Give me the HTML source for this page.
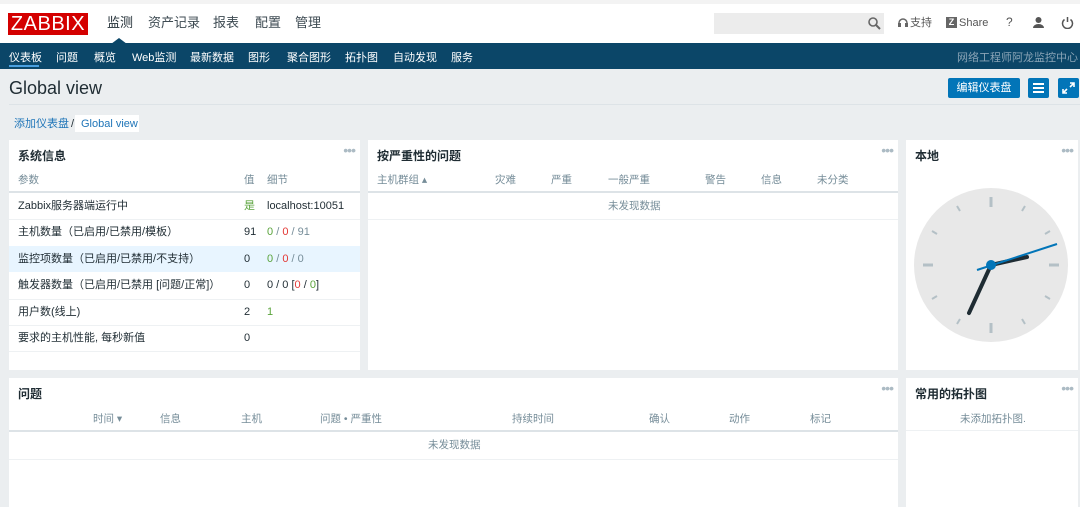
<!DOCTYPE html>
<html><head><meta charset="utf-8"><style>
*{margin:0;padding:0;box-sizing:border-box;white-space:nowrap}
body{width:1080px;height:507px;overflow:hidden;background:#ebeef0;font-family:"Liberation Sans","Noto Sans CJK SC",sans-serif;font-size:11px;color:#1f2c33;position:relative}
.a{position:absolute;white-space:nowrap;line-height:14px}
.top{position:absolute;left:0;top:0;width:1080px;height:43px;background:#fff;border-top:4px solid #f3f3f3}
.nav{position:absolute;left:0;top:43px;width:1080px;height:26px;background:#0b4668}
.nav span{position:absolute;top:6px;color:#fff;font-size:11px;white-space:nowrap}
.w{position:absolute;background:#fff}
.h{position:absolute;left:9px;top:7px;font-size:12px;font-weight:bold;color:#1f2c33}
.dots{position:absolute;top:2px;right:5px;color:#acbbc4;font-size:14px;letter-spacing:-1px}
.th{position:absolute;color:#768d99;font-size:10.5px;line-height:14px}
.hl{position:absolute;left:0;right:0;height:2px;background:#dde3e7}
.rl{position:absolute;left:0;right:0;height:1px;background:#eef1f3}
.g{color:#59a33b}.r{color:#e33734}.gr{color:#768d99}
.btn{position:absolute;background:#0275b8;border-radius:2px;color:#fff}
</style></head><body>
<div class="top"></div>
<div class="a" style="left:8px;top:13px;width:80px;height:22px;background:#d40000;color:#fff;font-size:20px;line-height:22px;text-align:center;letter-spacing:0.5px">ZABBIX</div>
<div class="a" style="left:107px;top:16px;font-size:13px;color:#1f2c33">监测</div>
<div class="a" style="left:148px;top:16px;font-size:13px;color:#3d4a52">资产记录</div>
<div class="a" style="left:213px;top:16px;font-size:13px;color:#3d4a52">报表</div>
<div class="a" style="left:255px;top:16px;font-size:13px;color:#3d4a52">配置</div>
<div class="a" style="left:295px;top:16px;font-size:13px;color:#3d4a52">管理</div>
<div class="a" style="left:111px;top:38px;width:0;height:0;border-left:8px solid transparent;border-right:8px solid transparent;border-bottom:6px solid #0b4668"></div>
<div class="a" style="left:714px;top:13px;width:170px;height:21px;background:#ececec"></div>
<svg class="a" style="left:867px;top:16px" width="14" height="14"><circle cx="6" cy="6" r="4" stroke="#666" stroke-width="1.6" fill="none"/><line x1="9" y1="9" x2="13" y2="13" stroke="#666" stroke-width="2"/></svg>
<svg class="a" style="left:897px;top:17px" width="12" height="12"><path d="M2 8V6a4 4 0 0 1 8 0v2" stroke="#666" stroke-width="1.5" fill="none"/><rect x="1" y="6" width="3" height="4" fill="#666"/><rect x="8" y="6" width="3" height="4" fill="#666"/></svg>
<div class="a" style="left:910px;top:16px;font-size:11px;color:#555">支持</div>
<div class="a" style="left:946px;top:17px;width:11px;height:11px;background:#666;color:#fff;font-size:9px;font-weight:bold;text-align:center;line-height:11px">Z</div>
<div class="a" style="left:959px;top:16px;font-size:11px;color:#555">Share</div>
<div class="a" style="left:1006px;top:15px;font-size:12px;color:#555">?</div>
<svg class="a" style="left:1032px;top:16px" width="13" height="13"><circle cx="6.5" cy="4" r="3" fill="#555"/><path d="M1 12a5.5 4 0 0 1 11 0z" fill="#555"/></svg>
<svg class="a" style="left:1061px;top:16px" width="13" height="13"><path d="M3.5 3.5a5 5 0 1 0 6 0" stroke="#555" stroke-width="1.5" fill="none"/><line x1="6.5" y1="1" x2="6.5" y2="6" stroke="#555" stroke-width="1.5"/></svg>
<div class="nav">
<span style="left:9px">仪表板</span><span style="left:56px">问题</span><span style="left:94px">概览</span><span style="left:132px">Web监测</span><span style="left:190px">最新数据</span><span style="left:248px">图形</span><span style="left:287px">聚合图形</span><span style="left:345px">拓扑图</span><span style="left:393px">自动发现</span><span style="left:451px">服务</span>
<span style="right:2px;color:#8aa4b6">网络工程师阿龙监控中心</span>
</div>
<div class="a" style="left:9px;top:65px;width:30px;height:2px;background:#4aa0e0"></div>
<div class="a" style="left:9px;top:78px;font-size:18px;line-height:20px;color:#1f2c33">Global view</div>
<div class="btn" style="left:948px;top:78px;width:72px;height:20px;text-align:center;line-height:20px;font-size:11px">编辑仪表盘</div>
<div class="btn" style="left:1028px;top:78px;width:21px;height:20px"><div style="position:absolute;left:5px;top:5px;width:11px;height:2px;background:#fff;box-shadow:0 4px 0 #fff,0 8px 0 #fff"></div></div>
<div class="btn" style="left:1058px;top:78px;width:21px;height:20px"><svg width="21" height="20"><path d="M12 5h4v4M16 5l-4 4M9 15H5v-4M5 15l4-4" stroke="#fff" stroke-width="1.6" fill="none"/></svg></div>
<div class="a" style="left:9px;top:104px;width:1071px;height:1px;background:#dde3e7"></div>
<div class="a" style="left:14px;top:117px;color:#1f75b8">添加仪表盘</div>
<div class="a" style="left:71px;top:117px;color:#1f2c33">/</div>
<div class="a" style="left:75px;top:115px;width:64px;height:17px;background:#fff"></div>
<div class="a" style="left:81px;top:117px;color:#1f75b8">Global view</div>

<div class="w" style="left:9px;top:140px;width:351px;height:230px">
<div class="h">系统信息</div><div class="dots">•••</div>
<div class="th" style="left:9px;top:33px">参数</div><div class="th" style="left:235px;top:33px">值</div><div class="th" style="left:258px;top:33px">细节</div>
<div class="hl" style="top:51px"></div>
<div class="a" style="left:9px;top:59px">Zabbix服务器端运行中</div><div class="a g" style="left:235px;top:59px">是</div><div class="a" style="left:258px;top:59px">localhost:10051</div>
<div class="rl" style="top:79px"></div>
<div class="a" style="left:9px;top:85px">主机数量（已启用/已禁用/模板）</div><div class="a" style="left:235px;top:85px">91</div><div class="a" style="left:258px;top:85px"><span class="g">0</span> <span class="gr">/</span> <span class="r">0</span> <span class="gr">/ 91</span></div>
<div class="a" style="left:0;top:106px;width:351px;height:26px;background:#e8f5ff"></div>
<div class="a" style="left:9px;top:112px">监控项数量（已启用/已禁用/不支持）</div><div class="a" style="left:235px;top:112px">0</div><div class="a" style="left:258px;top:112px"><span class="g">0</span> <span class="gr">/</span> <span class="r">0</span> <span class="gr">/ 0</span></div>
<div class="a" style="left:9px;top:138px">触发器数量（已启用/已禁用 [问题/正常]）</div><div class="a" style="left:235px;top:138px">0</div><div class="a" style="left:258px;top:138px">0 / 0 [<span class="r">0</span> / <span class="g">0</span>]</div>
<div class="rl" style="top:159px"></div>
<div class="a" style="left:9px;top:165px">用户数(线上)</div><div class="a" style="left:235px;top:165px">2</div><div class="a g" style="left:258px;top:165px">1</div>
<div class="rl" style="top:185px"></div>
<div class="a" style="left:9px;top:191px">要求的主机性能, 每秒新值</div><div class="a" style="left:235px;top:191px">0</div>
<div class="rl" style="top:211px"></div>
</div>

<div class="w" style="left:368px;top:140px;width:530px;height:230px">
<div class="h">按严重性的问题</div><div class="dots">•••</div>
<div class="th" style="left:9px;top:33px">主机群组 ▴</div><div class="th" style="left:127px;top:33px">灾难</div><div class="th" style="left:183px;top:33px">严重</div><div class="th" style="left:240px;top:33px">一般严重</div><div class="th" style="left:337px;top:33px">警告</div><div class="th" style="left:393px;top:33px">信息</div><div class="th" style="left:449px;top:33px">未分类</div>
<div class="hl" style="top:51px"></div>
<div class="th" style="left:240px;top:59px">未发现数据</div>
<div class="rl" style="top:79px"></div>
</div>

<div class="w" style="left:906px;top:140px;width:172px;height:230px">
<div class="h">本地</div><div class="dots">•••</div>
<svg class="a" style="left:0;top:0" width="172" height="230">
<circle cx="85" cy="125" r="77" fill="#e8e8e8"/>
<g stroke="#b4c0c6" stroke-linecap="butt">
<line x1="85" y1="57" x2="85" y2="67" stroke-width="3"/>
<line x1="85" y1="183" x2="85" y2="193" stroke-width="3"/>
<line x1="17" y1="125" x2="27" y2="125" stroke-width="3"/>
<line x1="143" y1="125" x2="153" y2="125" stroke-width="3"/>
<g stroke-width="2">
<line x1="119" y1="66" x2="116" y2="71"/><line x1="144" y1="91" x2="139" y2="94"/>
<line x1="144" y1="159" x2="139" y2="156"/><line x1="119" y1="184" x2="116" y2="179"/>
<line x1="51" y1="184" x2="54" y2="179"/><line x1="26" y1="159" x2="31" y2="156"/>
<line x1="26" y1="91" x2="31" y2="94"/><line x1="51" y1="66" x2="54" y2="71"/>
</g></g>
<line x1="85" y1="125" x2="121" y2="117" stroke="#1f2c33" stroke-width="4" stroke-linecap="round"/>
<line x1="85" y1="125" x2="63" y2="173" stroke="#1f2c33" stroke-width="4" stroke-linecap="round"/>
<line x1="71" y1="130" x2="151" y2="104" stroke="#0275b8" stroke-width="2"/>
<circle cx="85" cy="125" r="5" fill="#0275b8"/>
</svg>
</div>

<div class="w" style="left:9px;top:378px;width:889px;height:129px">
<div class="h">问题</div><div class="dots">•••</div>
<div class="th" style="left:84px;top:34px">时间 ▾</div><div class="th" style="left:151px;top:34px">信息</div><div class="th" style="left:232px;top:34px">主机</div><div class="th" style="left:311px;top:34px">问题 • 严重性</div><div class="th" style="left:503px;top:34px">持续时间</div><div class="th" style="left:640px;top:34px">确认</div><div class="th" style="left:720px;top:34px">动作</div><div class="th" style="left:801px;top:34px">标记</div>
<div class="hl" style="top:52px"></div>
<div class="th" style="left:419px;top:60px">未发现数据</div>
<div class="rl" style="top:81px"></div>
</div>

<div class="w" style="left:906px;top:378px;width:172px;height:129px">
<div class="h">常用的拓扑图</div><div class="dots">•••</div>
<div class="th" style="left:54px;top:34px">未添加拓扑图.</div>
<div class="rl" style="top:52px"></div>
</div>
</body></html>
